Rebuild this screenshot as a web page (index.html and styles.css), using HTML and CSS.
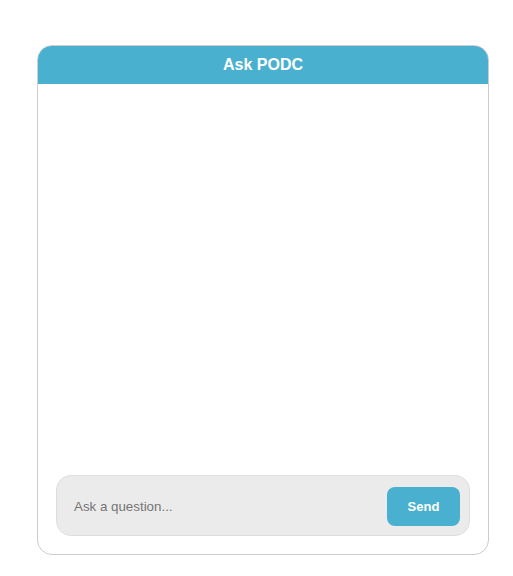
FILE: index.html
```html
<!DOCTYPE html>
<html>
<head>
<meta charset="utf-8">
<link rel="stylesheet" href="styles.css">
</head>
<body>
<div class="chat">
  <div class="chat-header">Ask PODC</div>
  <div class="chat-body">
    <div class="messages"></div>
    <div class="composer">
      <input class="composer-input" type="text" placeholder="Ask a question...">
      <button class="send-btn">Send</button>
    </div>
  </div>
</div>
</body>
</html>
```
FILE: styles.css
```css
html, body {
  margin: 0;
  padding: 0;
  background: #ffffff;
  font-family: "Liberation Sans", Arial, sans-serif;
}
body {
  padding: 45px 0 0 37px;
}
.chat {
  width: 452px;
  height: 510px;
  box-sizing: border-box;
  border: 1px solid #cccccc;
  border-radius: 15px;
  overflow: hidden;
  display: flex;
  flex-direction: column;
}
.chat-header {
  background: #4ab0cf;
  color: #ffffff;
  font-weight: bold;
  font-size: 16px;
  height: 38px;
  line-height: 38px;
  text-align: center;
}
.chat-body {
  flex: 1;
  display: flex;
  flex-direction: column;
  padding: 0 18px 18px 18px;
}
.messages {
  flex: 1;
}
.composer {
  display: flex;
  align-items: center;
  gap: 10px;
  background: #ebebeb;
  border: 1px solid #dddddd;
  border-radius: 15px;
  padding: 11px 9px 9px 10px;
}
.composer-input {
  flex: 1;
  border: none;
  background: transparent;
  outline: none;
  font-family: "Liberation Sans", Arial, sans-serif;
  font-size: 13.333px;
  color: #333;
  padding: 0 0 0 7px;
  height: 39px;
}
.composer-input::placeholder {
  color: #757575;
}
.send-btn {
  width: 73px;
  height: 39px;
  border: none;
  border-radius: 8px;
  background: #4ab0cf;
  color: #ffffff;
  font-family: "Liberation Sans", Arial, sans-serif;
  font-weight: bold;
  font-size: 13px;
  padding: 0;
}
```
